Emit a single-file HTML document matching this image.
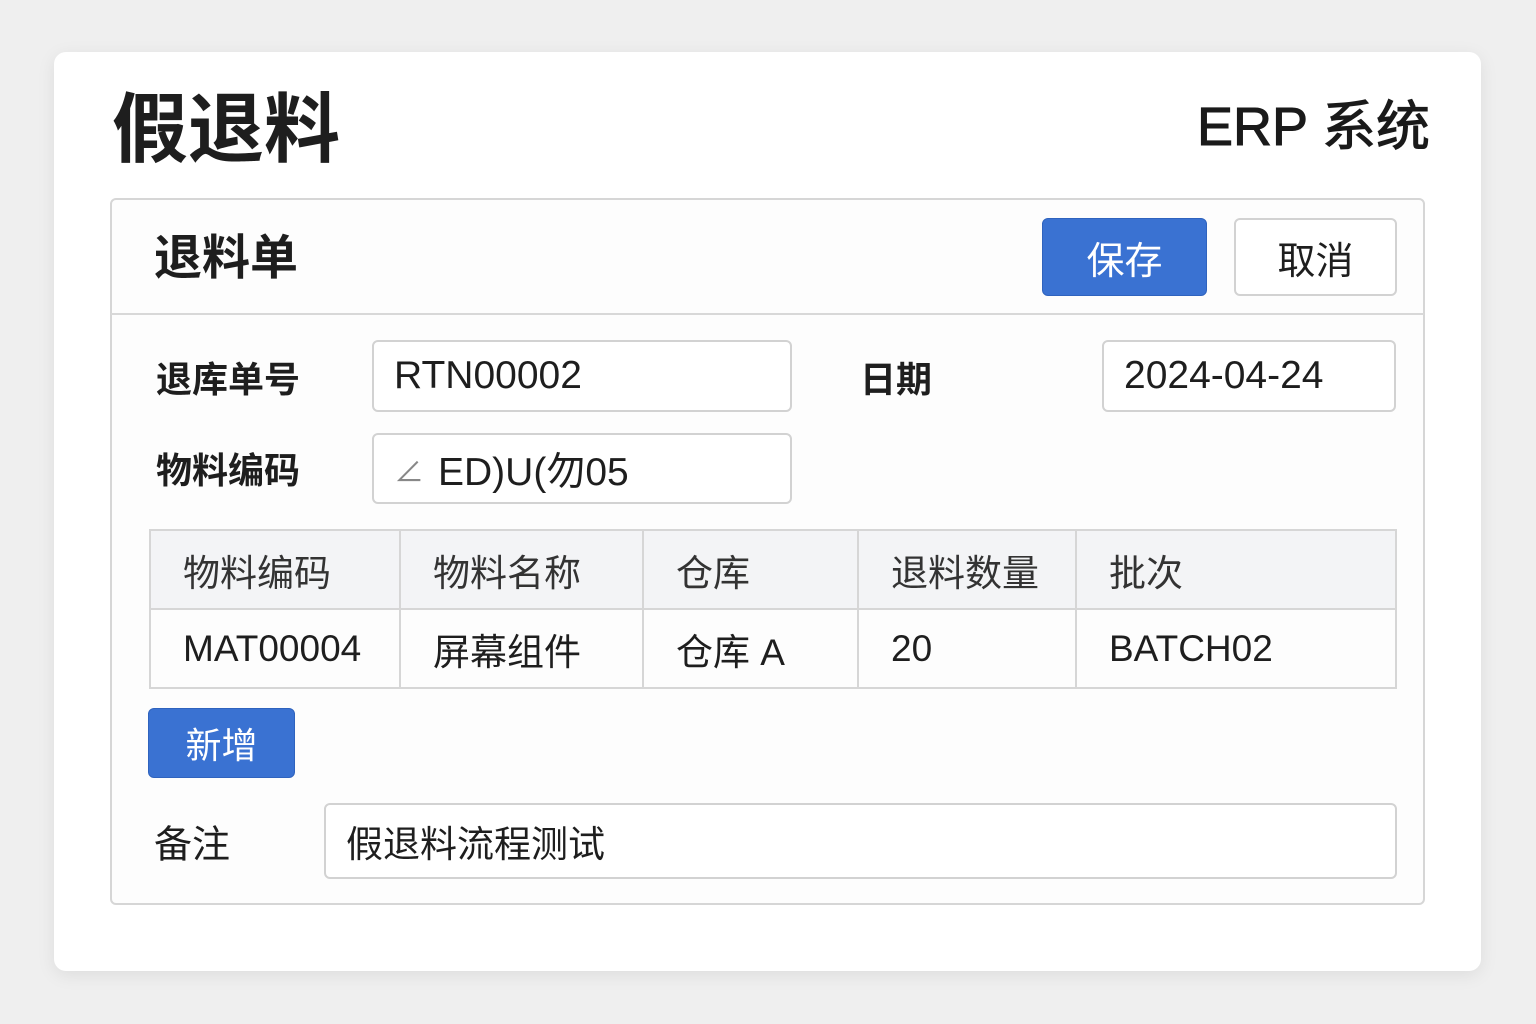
<!DOCTYPE html><html><head><meta charset="utf-8"><style>
*{box-sizing:border-box;margin:0;padding:0}
body{width:1536px;height:1024px;background:#efefef;font-family:"Liberation Sans","Noto Sans CJK SC",sans-serif;color:#1e1e1e;position:relative;overflow:hidden}
.a{position:absolute}
.card{left:54px;top:52px;width:1427px;height:919px;background:#fff;border-radius:12px;box-shadow:0 4px 18px rgba(0,0,0,.08)}
.panel{left:110px;top:198px;width:1315px;height:707px;border:2px solid #d6d6d6;border-radius:6px;background:#fdfdfd}
.btn{display:flex;align-items:center;justify-content:center;border-radius:6px;font-size:38px}
.blue{background:#3a72d2;color:#fff;border:1px solid #2f63be}
.inp{border:2px solid #d2d2d2;border-radius:6px;background:#fff;display:flex;align-items:center;padding-left:20px;font-size:39px}
.lbl{font-size:36px;font-weight:bold;transform:translateY(-50%)}
table{border-collapse:collapse;position:absolute;left:149px;top:529px;width:1248px;font-size:37px}
td{border:2px solid #d6d6d6;height:79px;padding-left:32px}
tr:first-child td{background:#f3f4f6;color:#333}
</style></head><body>
<div class="a card"></div>
<div class="a" style="left:112px;top:68px;font-size:76px;font-weight:bold">假退料</div>
<div class="a" style="right:106px;top:82px;font-size:54px;color:#1a1a1a;-webkit-text-stroke:1px #1a1a1a">ERP 系统</div>
<div class="a panel"></div>
<div class="a" style="left:111px;top:313px;width:1313px;height:2px;background:#d8d8d8"></div>
<div class="a" style="left:154px;top:218px;font-size:48px;font-weight:bold">退料单</div>
<div class="a btn blue" style="left:1042px;top:218px;width:165px;height:78px">保存</div>
<div class="a btn" style="left:1234px;top:218px;width:163px;height:78px;border:2px solid #d2d2d2;background:#fff">取消</div>
<div class="a lbl" style="left:156px;top:377px">退库单号</div>
<div class="a inp" style="left:372px;top:340px;width:420px;height:72px">RTN00002</div>
<div class="a lbl" style="left:860px;top:377px">日期</div>
<div class="a inp" style="left:1102px;top:340px;width:294px;height:72px">2024-04-24</div>
<div class="a lbl" style="left:156px;top:468px">物料编码</div>
<div class="a inp" style="left:372px;top:433px;width:420px;height:71px"><span style="color:#888;font-size:30px;margin-right:14px">∠</span>ED)U(勿05</div>
<table><tr><td style="width:250px">物料编码</td><td style="width:243px">物料名称</td><td style="width:215px">仓库</td><td style="width:218px">退料数量</td><td>批次</td></tr>
<tr><td>MAT00004</td><td>屏幕组件</td><td>仓库 A</td><td>20</td><td>BATCH02</td></tr></table>
<div class="a btn blue" style="left:148px;top:708px;width:147px;height:70px;font-size:36px">新增</div>
<div class="a lbl" style="left:154px;top:841px;font-weight:normal;font-size:38px">备注</div>
<div class="a inp" style="left:324px;top:803px;width:1073px;height:76px;font-size:37px">假退料流程测试</div>
</body></html>
